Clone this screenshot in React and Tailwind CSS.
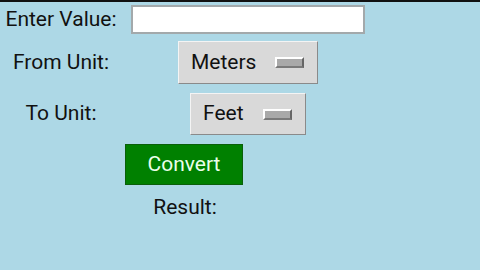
import React from 'react';

const Indicator = () => (
  <span className="block w-[29px] h-[11px] bg-[#a9a9a9] border-2 border-t-white border-l-white border-b-[#7a7a7a] border-r-[#666]" />
);

const OptionMenu = ({ label, width }) => (
  <div
    className={`flex items-center justify-between pl-3 pr-[13px] bg-[#d9d9d9] border border-t-[#f4f4f4] border-l-[#f4f4f4] border-b-[#8a8a8a] border-r-[#8a8a8a] text-[21px] text-[#111] ${width}`}
  >
    <span>{label}</span>
    <Indicator />
  </div>
);

const App = () => {
  return (
    <div className="w-[480px] h-[270px] bg-[#add8e6] border-t-2 border-[#111] font-['Roboto',sans-serif] text-[21px] text-[#111] overflow-hidden">
      <div className="grid grid-cols-[122px_252px] items-center mt-[2px] h-[29px]">
        <div className="flex justify-center">Enter Value:</div>
        <div className="flex justify-center">
          <input
            className="w-[234px] h-[29px] bg-white border-2 border-[#a3a9ab] outline-none"
            defaultValue=""
          />
        </div>
      </div>
      <div className="grid grid-cols-[122px_252px] items-center mt-[8px] h-[43px]">
        <div className="flex justify-center">From Unit:</div>
        <div className="flex justify-center">
          <OptionMenu label="Meters" width="w-[140px] h-[43px]" />
        </div>
      </div>
      <div className="grid grid-cols-[122px_252px] items-center mt-[9px] h-[42px]">
        <div className="flex justify-center">To Unit:</div>
        <div className="flex justify-center">
          <OptionMenu label="Feet" width="w-[116px] h-[42px]" />
        </div>
      </div>
      <div className="flex justify-center w-[368px] mt-[9px]">
        <button className="w-[118px] h-[41px] bg-[#008000] border border-[#0a5f0a] text-[#eaffea] text-[21px]">
          Convert
        </button>
      </div>
      <div className="flex justify-center w-[370px] mt-[12px] h-[22px] items-center">
        Result:
      </div>
    </div>
  );
};

export default App;
